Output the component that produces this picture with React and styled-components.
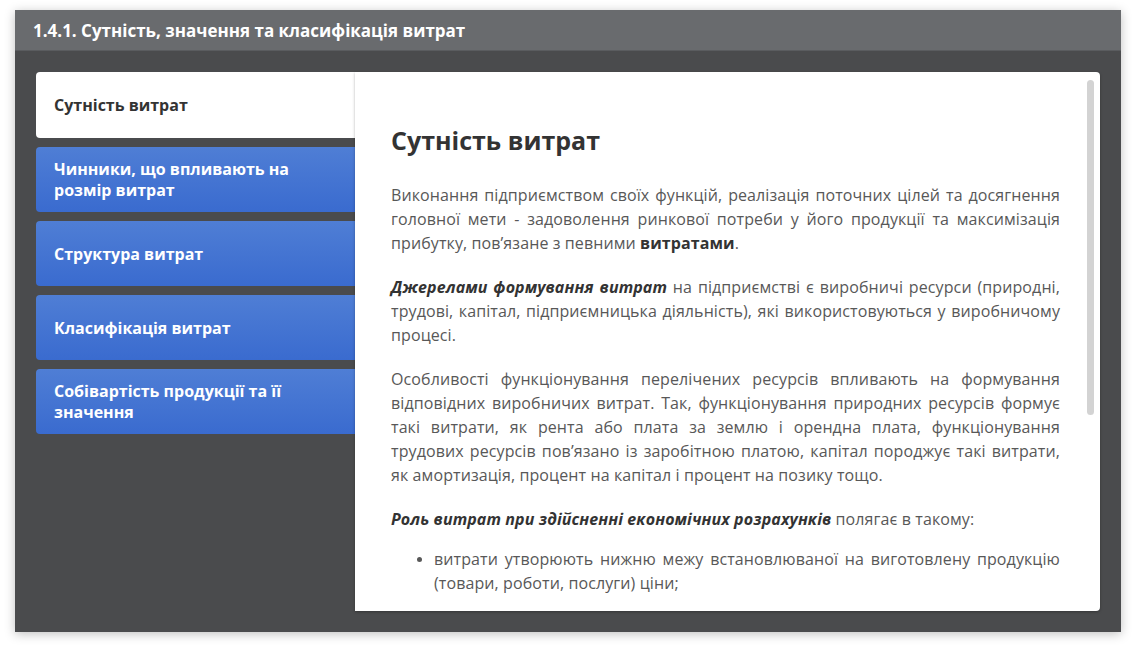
import React from 'react';
import styled, { createGlobalStyle } from 'styled-components';

const GlobalStyle = createGlobalStyle`
  html, body {
    margin: 0;
    padding: 0;
    background: #ffffff;
  }
  body {
    font-family: "Open Sans", "Noto Sans", sans-serif;
  }
`;

const NAV = [
  { title: 'Сутність витрат', active: true },
  { title: 'Чинники, що впливають на розмір витрат' },
  { title: 'Структура витрат' },
  { title: 'Класифікація витрат' },
  { title: 'Собівартість продукції та її значення' },
];

const Page = styled.div`
  padding: 10px 15px 21px;
`;

const Frame = styled.div`
  display: flex;
  flex-direction: column;
  width: 1106px;
  height: 622px;
  background: #4a4b4d;
  box-shadow: 0 2px 10px rgba(0, 0, 0, 0.25);
`;

const Header = styled.header`
  display: flex;
  align-items: center;
  height: 41px;
  padding: 0 18px;
  background: #696b6e;
  border-bottom: 1px solid #5a5c5f;
  color: #ffffff;
  font-size: 17px;
  font-weight: 700;
  box-sizing: border-box;
`;

const Body = styled.div`
  display: flex;
  flex: 1;
  min-height: 0;
  padding: 21px;
`;

const Nav = styled.nav`
  display: flex;
  flex-direction: column;
  gap: 9px;
  width: 319px;
  flex-shrink: 0;
`;

const NavItem = styled.div`
  display: flex;
  align-items: center;
  height: ${({ $active }) => ($active ? '66px' : '65px')};
  padding: 1px 40px 0 18px;
  border-radius: 4px 0 0 4px;
  font-size: 16px;
  font-weight: 700;
  line-height: 21px;
  box-sizing: border-box;
  color: ${({ $active }) => ($active ? '#333333' : '#ffffff')};
  background: ${({ $active }) =>
    $active ? '#ffffff' : 'linear-gradient(to bottom, #4f7ed5, #3a6bcf)'};
`;

const Panel = styled.main`
  position: relative;
  flex: 1;
  background: #ffffff;
  border-radius: 0 4px 4px 0;
  overflow: hidden;
  box-shadow: 0 1px 3px rgba(0, 0, 0, 0.3);
`;

const ScrollThumb = styled.div`
  position: absolute;
  top: 8px;
  right: 6px;
  width: 7px;
  height: 335px;
  border-radius: 4px;
  background: #d3d3d3;
`;

const Article = styled.article`
  padding: 50px 40px 0 36px;
  color: #585858;
  font-size: 16px;
  line-height: 24px;
  letter-spacing: 0.1px;
`;

const Title = styled.h2`
  margin: 0 0 25px;
  color: #333333;
  font-size: 25px;
  font-weight: 700;
  line-height: 36px;
  letter-spacing: 0;
`;

const Paragraph = styled.p`
  margin: 0 0 20px;
  text-align: justify;

  b, strong {
    color: #333333;
  }
`;

const List = styled.ul`
  margin: -4px 0 0;
  padding-left: 43px;

  li {
    text-align: justify;
    margin-bottom: 12px;
  }
  li::marker {
    font-size: 14px;
  }
`;

const App = () => {
  return (
    <Page>
      <GlobalStyle />
      <Frame>
        <Header>1.4.1. Сутність, значення та класифікація витрат</Header>
        <Body>
          <Nav>
            {NAV.map((item) => (
              <NavItem key={item.title} $active={item.active}>
                {item.title}
              </NavItem>
            ))}
          </Nav>
          <Panel>
            <Article>
              <Title>Сутність витрат</Title>
              <Paragraph>
                Виконання підприємством своїх функцій, реалізація поточних цілей та
                досягнення головної мети - задоволення ринкової потреби у його продукції
                та максимізація прибутку, пов’язане з певними <b>витратами</b>.
              </Paragraph>
              <Paragraph>
                <b>
                  <i>Джерелами формування витрат</i>
                </b>{' '}
                на підприємстві є виробничі ресурси (природні, трудові, капітал,
                підприємницька діяльність), які використовуються у виробничому процесі.
              </Paragraph>
              <Paragraph>
                Особливості функціонування перелічених ресурсів впливають на формування
                відповідних виробничих витрат. Так, функціонування природних ресурсів
                формує такі витрати, як рента або плата за землю і орендна плата,
                функціонування трудових ресурсів пов’язано із заробітною платою, капітал
                породжує такі витрати, як амортизація, процент на капітал і процент на
                позику тощо.
              </Paragraph>
              <Paragraph>
                <b>
                  <i>Роль витрат при здійсненні економічних розрахунків</i>
                </b>{' '}
                полягає в такому:
              </Paragraph>
              <List>
                <li>
                  витрати утворюють нижню межу встановлюваної на виготовлену продукцію
                  (товари, роботи, послуги) ціни;
                </li>
              </List>
            </Article>
            <ScrollThumb />
          </Panel>
        </Body>
      </Frame>
    </Page>
  );
};

export default App;
